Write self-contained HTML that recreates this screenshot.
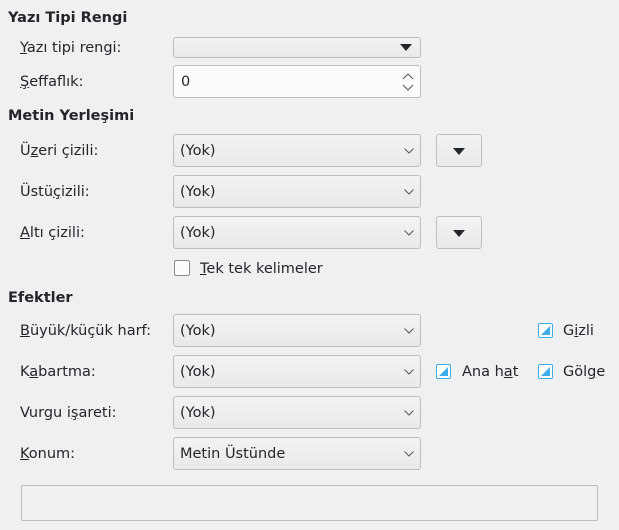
<!DOCTYPE html>
<html><head><meta charset="utf-8"><style>
body{margin:0;width:619px;height:530px;background:#eff0f1;font-family:"DejaVu Sans","Liberation Sans",sans-serif;font-size:14.5px;color:#232629;position:relative;overflow:hidden}
.a{position:absolute;white-space:nowrap}
.h{font-weight:bold}
.l{line-height:35px}
.cb{position:absolute;box-sizing:border-box;border:1px solid #bcbebf;border-radius:3px;background:linear-gradient(#f2f3f4,#e8e9ea);height:33px;line-height:33px;padding-left:6px}
.cb svg{position:absolute;right:6px;top:13px}
.sm{position:absolute;box-sizing:border-box;border:1px solid #bcbebf;border-radius:3px;background:linear-gradient(#f2f3f4,#e8e9ea);width:46px;height:33px}
.tri{position:absolute;left:50%;top:13px;margin-left:-6px;width:0;height:0;border-left:6px solid transparent;border-right:6px solid transparent;border-top:7px solid #232629}
.chk{position:absolute;width:13px;height:13px;border:1px solid #3daee9;border-radius:2px;background:#fff;box-sizing:content-box}
.chk:after{content:"";position:absolute;left:2px;top:2px;width:0;height:0;border-left:9px solid transparent;border-bottom:9px solid #3daee9}
u{text-decoration:underline}
</style></head><body>
<div class="a h" style="left:8px;top:7px;line-height:22px">Yazı Tipi Rengi</div>
<div class="a" style="left:20px;top:38px;line-height:20px"><u>Y</u>azı tipi rengi:</div>
<div class="cb" style="left:173px;top:37px;width:248px;height:21px"><div class="tri" style="left:auto;right:8px;top:6px"></div></div>
<div class="a l" style="left:20px;top:65px"><u>Ş</u>effaflık:</div>
<div class="a" style="left:173px;top:65px;width:248px;height:33px;box-sizing:border-box;border:1px solid #bcbebf;border-radius:3px;background:#fcfcfc;padding-left:7px;line-height:33px">0
<svg style="position:absolute;right:6px;top:6px" width="12" height="20"><path d="M1 7 L6 2 L11 7 M1 13 L6 18 L11 13" fill="none" stroke="#555" stroke-width="1"/></svg></div>
<div class="a h" style="left:8px;top:105px;line-height:22px">Metin Yerleşimi</div>

<div class="a l" style="left:20px;top:134px">Ü<u>z</u>eri çizili:</div>
<div class="cb" style="left:173px;top:134px;width:248px">(Yok)<svg width="10" height="6"><path d="M0.5 0.5 L5 5 L9.5 0.5" fill="none" stroke="#555"/></svg></div>
<div class="sm" style="left:436px;top:134px"><div class="tri"></div></div>
<div class="a l" style="left:20px;top:175px">Üstü<u>ç</u>izili:</div>
<div class="cb" style="left:173px;top:175px;width:248px">(Yok)<svg width="10" height="6"><path d="M0.5 0.5 L5 5 L9.5 0.5" fill="none" stroke="#555"/></svg></div>
<div class="a l" style="left:20px;top:216px"><u>A</u>ltı çizili:</div>
<div class="cb" style="left:173px;top:216px;width:248px">(Yok)<svg width="10" height="6"><path d="M0.5 0.5 L5 5 L9.5 0.5" fill="none" stroke="#555"/></svg></div>
<div class="sm" style="left:436px;top:216px"><div class="tri"></div></div>
<div class="a" style="left:174px;top:260px;width:14px;height:14px;border:1px solid #8a8c8e;border-radius:2px;background:#fcfcfc"></div>
<div class="a" style="left:200px;top:259px;line-height:20px"><u>T</u>ek tek kelimeler</div>
<div class="a h" style="left:8px;top:287px;line-height:22px">Efektler</div>

<div class="a l" style="left:20px;top:314px"><u>B</u>üyük/küçük harf:</div>
<div class="cb" style="left:173px;top:314px;width:248px">(Yok)<svg width="10" height="6"><path d="M0.5 0.5 L5 5 L9.5 0.5" fill="none" stroke="#555"/></svg></div>
<div class="chk" style="left:538px;top:323px"></div>
<div class="a l" style="left:563px;top:314px">G<u>i</u>zli</div>
<div class="a l" style="left:20px;top:355px">K<u>a</u>bartma:</div>
<div class="cb" style="left:173px;top:355px;width:248px">(Yok)<svg width="10" height="6"><path d="M0.5 0.5 L5 5 L9.5 0.5" fill="none" stroke="#555"/></svg></div>
<div class="chk" style="left:436px;top:364px"></div>
<div class="a l" style="left:462px;top:355px">Ana h<u>a</u>t</div>
<div class="chk" style="left:538px;top:364px"></div>
<div class="a l" style="left:563px;top:355px">Göl<u>g</u>e</div>
<div class="a l" style="left:20px;top:396px">Vurgu i<u>ş</u>areti:</div>
<div class="cb" style="left:173px;top:396px;width:248px">(Yok)<svg width="10" height="6"><path d="M0.5 0.5 L5 5 L9.5 0.5" fill="none" stroke="#555"/></svg></div>
<div class="a l" style="left:20px;top:437px"><u>K</u>onum:</div>
<div class="cb" style="left:173px;top:437px;width:248px">Metin Üstünde<svg width="10" height="6"><path d="M0.5 0.5 L5 5 L9.5 0.5" fill="none" stroke="#555"/></svg></div>
<div class="a" style="left:21px;top:485px;width:577px;height:36px;box-sizing:border-box;border:1px solid #bcbebf;border-radius:2px;background:#eff0f1"></div>
</body></html>
